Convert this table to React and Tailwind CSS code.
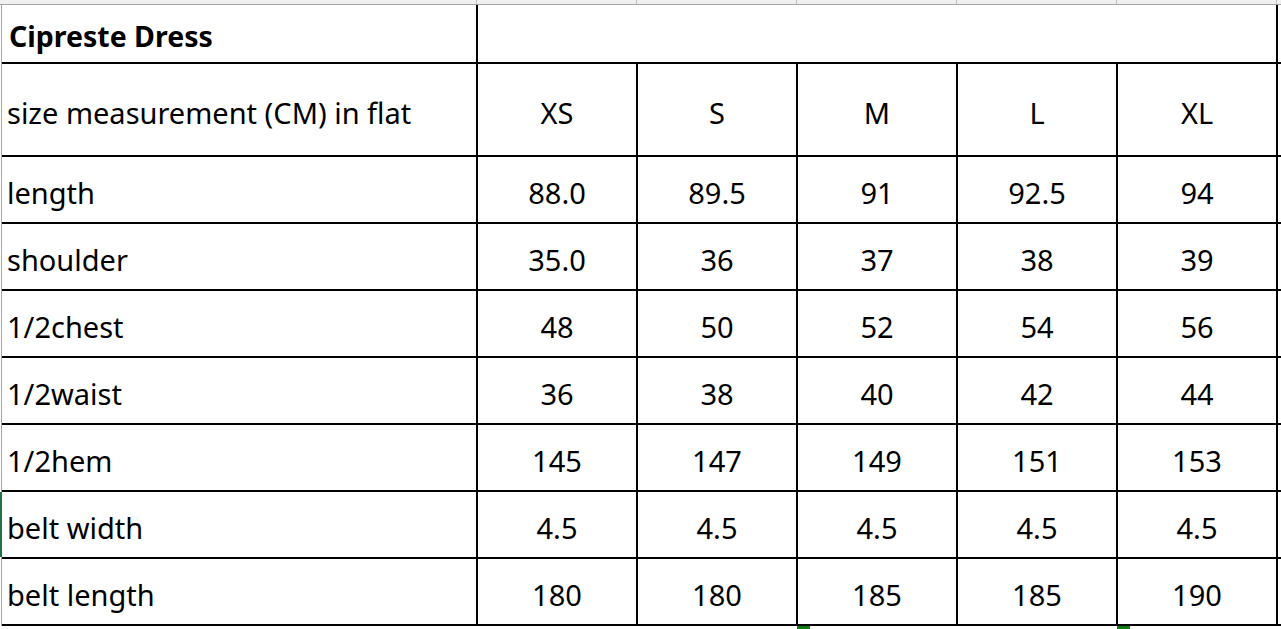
import React from "react";

const sizes = ["XS", "S", "M", "L", "XL"];
const rows = [
  ["length", "88.0", "89.5", "91", "92.5", "94"],
  ["shoulder", "35.0", "36", "37", "38", "39"],
  ["1/2chest", "48", "50", "52", "54", "56"],
  ["1/2waist", "36", "38", "40", "42", "44"],
  ["1/2hem", "145", "147", "149", "151", "153"],
  ["belt width", "4.5", "4.5", "4.5", "4.5", "4.5"],
  ["belt length", "180", "180", "185", "185", "190"],
];

const font = { fontFamily: '"Noto Sans", "Noto Sans CJK SC", sans-serif' };

export default function App() {
  return (
    <div className="w-[1281px] h-[629px] bg-white overflow-hidden relative text-black" style={font}>
      {/* top header strip */}
      <div className="flex h-[5px] bg-[#f0f0f0] border-b border-[#a6a6a6]">
        <div className="w-[477px] border-r border-[#c0c0c0]" />
        {sizes.map((s) => (
          <div key={s} className="w-[160px] border-r border-[#c0c0c0]" />
        ))}
      </div>
      <div className="ml-[1px] border-l border-[#a6a6a6]">
        {/* title row */}
        <div className="flex h-[59px] border-b-2 border-black w-[1280px]">
          <div className="w-[476px] border-r-2 border-black flex items-center pl-[7px] pt-[5px] text-[28.5px] font-bold">
            Cipreste Dress
          </div>
          <div className="w-[800px] border-r-2 border-black" />
        </div>
        {/* header row */}
        <div className="flex h-[93px] border-b-2 border-black w-[1280px]">
          <div className="w-[476px] border-r-2 border-black flex items-center pl-[5px] pt-[6px] text-[29px]">
            size measurement (CM) in flat
          </div>
          {sizes.map((s) => (
            <div key={s} className="w-[160px] border-r-2 border-black flex items-center justify-center pt-[6px] text-[29px]">
              {s}
            </div>
          ))}
        </div>
        {rows.map((r, i) => (
          <div key={i} className="flex h-[67px] border-b-2 border-black w-[1280px]">
            <div className={`w-[476px] border-r-2 border-black flex items-center pl-[5px] pt-[7px] text-[29px] ${i === 5 ? "relative" : ""}`}>
              {i === 5 && <div className="absolute left-[-2px] top-0 bottom-0 w-[2px] bg-[#217346]" />}
              {r[0]}
            </div>
            {r.slice(1).map((v, j) => (
              <div key={j} className="w-[160px] border-r-2 border-black flex items-center justify-center pt-[7px] text-[29px]">
                {v}
              </div>
            ))}
          </div>
        ))}
      </div>
      <div className="absolute left-[797px] top-[626px] w-[13px] h-[3px] bg-[#107c10]" />
      <div className="absolute left-[1117px] top-[626px] w-[13px] h-[3px] bg-[#107c10]" />
    </div>
  );
}
